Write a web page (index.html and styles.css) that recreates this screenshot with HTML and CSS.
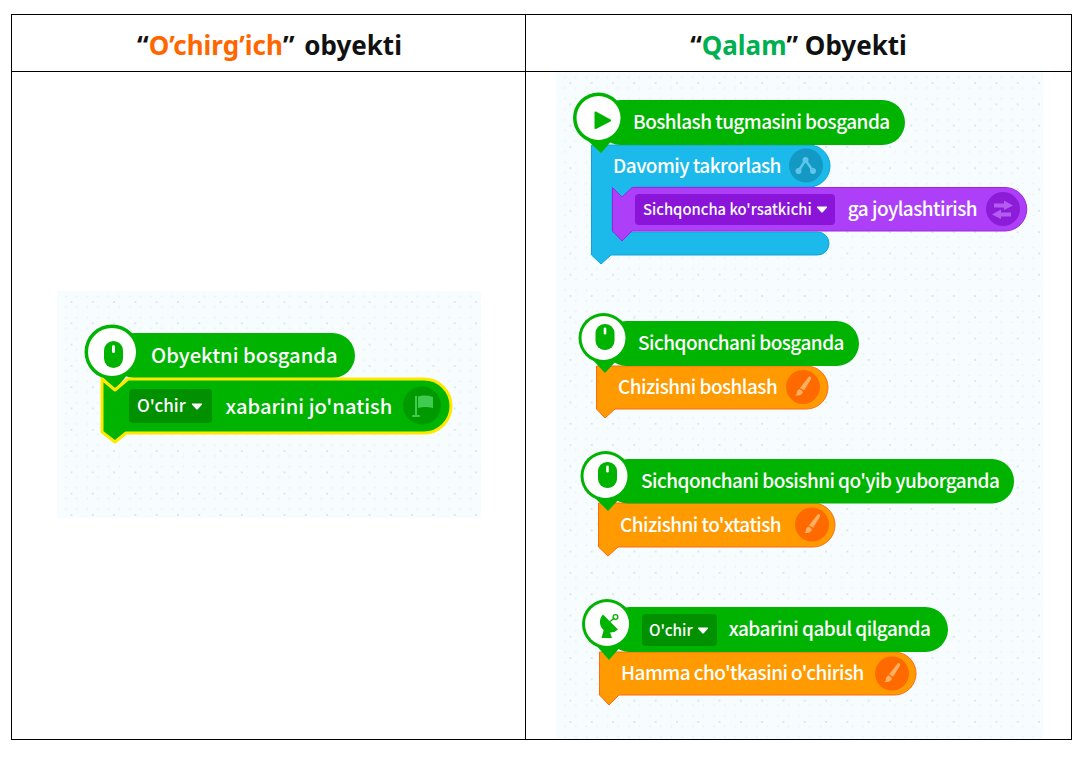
FILE: index.html
```html
<!DOCTYPE html>
<html lang="uz">
<head>
<meta charset="utf-8">
<title>Obyektlar</title>
<link rel="stylesheet" href="styles.css">
</head>
<body>
<svg class="defs" width="0" height="0" aria-hidden="true">
  <defs>
    <g id="i-brush">
      <path d="M6-10.5Q8.8-10.8 8-8L1.2 3.2-3 1Z"/>
      <path d="M-3.5 2Q-.5 3 0 5.5-2 9.200-7.8 8.500-5.500 7-6 5-5.500 2.500-3.500 2Z"/>
    </g>
    <g id="i-mouse">
      <rect x="-9.500" y="-13" width="19" height="26" rx="9"/>
      <rect class="slit" x="-1.300" y="-9.500" width="2.600" height="7" rx="1.300"/>
    </g>
    <path id="i-caret" d="M1.500 1.500H10.500Q11.500 1.500 11 2.500L7 7Q6 8 5 7L1 2.500Q.5 1.500 1.500 1.500Z"/>
  </defs>
</svg>
<main class="table">
  <h2 class="head head-left">“<span class="orange">O’chirg’ich</span>” obyekti</h2>
  <h2 class="head head-right">“<span class="green">Qalam</span>” Obyekti</h2>

  <section class="cell cell-left">
    <div class="canvas canvas-left">
      <div class="block b-hat1">
        <svg class="shape" viewBox="85 333 270 45">
          <g class="c-green">
            <rect x="112" y="333" width="243" height="45" rx="22.500"/>
            <circle cx="112" cy="352" r="27.500"/>
            <path d="M98 372 115 390 128 374Z"/>
          </g>
          <circle class="c-white" cx="112" cy="352" r="24"/>
          <g class="c-green">
            <rect x="104" y="341" width="19" height="27" rx="9.500"/>
            <rect class="slit" x="112" y="345" width="3" height="8" rx="1.500"/>
          </g>
        </svg>
        <span class="label">Obyektni bosganda</span>
      </div>
      <div class="block b-send">
        <svg class="shape" viewBox="101 378 351 56">
          <path class="c-green yellow-line" d="M102 379 115 390 128 379H424A27 27 0 0 1 424 433H126L115 442 102 432Z"/>
          <circle class="i-green" cx="422" cy="405.500" r="19"/>
          <g class="g-green">
            <rect x="415" y="396" width="2" height="20"/>
            <rect x="412" y="415" width="8" height="2" rx="1"/>
            <path d="M418 396.500Q425 394.500 433 397V408Q425 406 418 408Z"/>
          </g>
        </svg>
        <span class="drop drop-green"><span class="drop-text">O'chir</span><svg class="caret" viewBox="0 0 12 8"><use href="#i-caret"/></svg></span>
        <span class="label">xabarini jo'natish</span>
      </div>
    </div>
  </section>

  <section class="cell cell-right">
    <div class="canvas canvas-right">
      <div class="block b-loop">
        <svg class="shape" viewBox="591 145 239 120">
          <path class="c-blue" d="M591.500 145H809A21 21 0 0 1 809 187H634L622 199 612 189V232H817.500A11.500 11.500 0 0 1 817.500 255H611L601 264 591.500 255Z"/>
          <circle class="i-blue" cx="806" cy="165.500" r="17"/>
          <g class="g-blue">
            <path class="g-line" d="M798.500 171 805.500 160 813 171"/>
            <circle cx="805.500" cy="160" r="3"/>
            <circle cx="798.500" cy="171" r="3"/>
            <circle cx="813" cy="171" r="3"/>
          </g>
        </svg>
        <span class="label">Davomiy takrorlash</span>
      </div>
      <div class="block b-move">
        <svg class="shape" viewBox="612 187 415 44">
          <path class="c-purple" d="M612.500 187.500 622 197 632 187.500H1005A21.500 21.500 0 0 1 1005 231H632L622 241 612.500 231Z"/>
          <circle class="i-purple" cx="1003" cy="209" r="17"/>
          <g class="g-purple">
            <path d="M994 203.500H1004V200.500L1013 205.500 1004 210V207.500H994Z"/>
            <path d="M1011 212.500H1001V209.500L992 214.500 1001 219V216.500H1011Z"/>
          </g>
        </svg>
        <span class="drop drop-purple"><span class="drop-text">Sichqoncha ko'rsatkichi</span><svg class="caret" viewBox="0 0 12 8"><use href="#i-caret"/></svg></span>
        <span class="label">ga joylashtirish</span>
      </div>
      <div class="block b-hat2">
        <svg class="shape" viewBox="573 100 332 45">
          <g class="c-green">
            <rect x="598" y="100" width="307" height="45" rx="22.500"/>
            <circle cx="598.500" cy="118" r="25.500"/>
            <path d="M586 139 601 153 615 137Z"/>
          </g>
          <circle class="c-white" cx="598.500" cy="118" r="22"/>
          <path class="c-green play" d="M595.500 112.500 610 120.500 595.500 128Z"/>
        </svg>
        <span class="label">Boshlash tugmasini bosganda</span>
      </div>

      <div class="block b-or1">
        <svg class="shape" viewBox="596 366 232 43">
          <path class="c-orange" d="M596.500 366H806.500A21.500 21.500 0 0 1 806.500 409H615L605 418 596.500 409Z"/>
          <circle class="i-orange" cx="803" cy="387" r="17"/>
          <use class="g-orange" href="#i-brush" transform="translate(803 387)"/>
        </svg>
        <span class="label">Chizishni boshlash</span>
      </div>
      <div class="block b-hat3">
        <svg class="shape" viewBox="579 321 280 45">
          <g class="c-green">
            <rect x="604" y="321" width="255" height="45" rx="22.500"/>
            <circle cx="603.500" cy="338" r="25"/>
            <path d="M591 358 605 373 619 358Z"/>
          </g>
          <circle class="c-white" cx="603.500" cy="338" r="22"/>
          <use class="c-green" href="#i-mouse" transform="translate(605 337)"/>
        </svg>
        <span class="label">Sichqonchani bosganda</span>
      </div>

      <div class="block b-or2">
        <svg class="shape" viewBox="598 503 237 44">
          <path class="c-orange" d="M598.500 503H813A22 22 0 0 1 813 547H618L608 556 598.500 547Z"/>
          <circle class="i-orange" cx="812" cy="524.500" r="17"/>
          <use class="g-orange" href="#i-brush" transform="translate(812 524.500)"/>
        </svg>
        <span class="label">Chizishni to'xtatish</span>
      </div>
      <div class="block b-hat4">
        <svg class="shape" viewBox="581 459 433 44">
          <g class="c-green">
            <rect x="606" y="459" width="408" height="44.500" rx="22"/>
            <circle cx="605.500" cy="476" r="25"/>
            <path d="M593 496 608 511 622 496Z"/>
          </g>
          <circle class="c-white" cx="605.500" cy="476" r="22"/>
          <use class="c-green" href="#i-mouse" transform="translate(607.500 475)"/>
        </svg>
        <span class="label">Sichqonchani bosishni qo'yib yuborganda</span>
      </div>

      <div class="block b-or3">
        <svg class="shape" viewBox="599 652 317 43">
          <path class="c-orange" d="M599.500 652H894.500A21.500 21.500 0 0 1 894.500 695H619L609 705 599.500 695Z"/>
          <circle class="i-orange" cx="892" cy="673.500" r="17"/>
          <use class="g-orange" href="#i-brush" transform="translate(892 673.500)"/>
        </svg>
        <span class="label">Hamma cho'tkasini o'chirish</span>
      </div>
      <div class="block b-hat5">
        <svg class="shape" viewBox="582 607 366 45">
          <g class="c-green">
            <rect x="607" y="607" width="341" height="45" rx="22.500"/>
            <circle cx="607" cy="624" r="25"/>
            <path d="M595 644 609 660 623 644Z"/>
          </g>
          <circle class="c-white" cx="607" cy="624" r="22"/>
          <g class="c-green">
            <path d="M603 614.500A10.600 10.600 0 0 0 618 629.500Z"/>
            <path d="M601.500 638 604.500 627 608.500 628 612 638Z"/>
            <path class="dish-line" d="M610 621.500 614.500 618"/>
            <circle class="dish-ring" cx="615.500" cy="617" r="2.400"/>
          </g>
        </svg>
        <span class="drop drop-green"><span class="drop-text">O'chir</span><svg class="caret" viewBox="0 0 12 8"><use href="#i-caret"/></svg></span>
        <span class="label">xabarini qabul qilganda</span>
      </div>
    </div>
  </section>
</main>
</body>
</html>
```

FILE: styles.css
```css
* { box-sizing: border-box; }

html, body { margin: 0; background: #fff; }

body { padding: 14px 0 0 11px; }

.defs { position: absolute; }

.table {
  display: grid;
  grid-template-columns: 514px 545px;
  grid-template-rows: 57px 667px;
  width: 1061px;
  height: 726px;
  border: 1px solid #000;
}

.head {
  display: flex;
  justify-content: center;
  align-items: center;
  margin: 0;
  padding-top: 3px;
  font: 700 26px "Noto Sans", sans-serif;
  color: #111;
  white-space: pre;
  border-bottom: 1px solid #000;
}

.head-left { border-right: 1px solid #000; word-spacing: 3px; padding-left: 2px; }
.orange { color: #ff6600; }
.green { color: #00b050; }

.cell {
  display: flex;
  justify-content: center;
  align-items: center;
}

.cell-left { border-right: 1px solid #000; }

.canvas {
  position: relative;
  background-color: #f7fcff;
  background-image:
    radial-gradient(circle, #d8e8f2 1px, transparent 1.4px),
    radial-gradient(circle, #ecf4f9 .9px, transparent 1.2px);
  background-size: 21.3px 21.3px, 10.65px 10.65px;
  background-position: 3.8px .4px, 3.8px 0;
}

.canvas-left { width: 424px; height: 227px; margin: 0 0 2px 1px; }
.canvas-right { width: 487px; height: 667px; margin-left: 2px; }

.block {
  position: absolute;
  display: flex;
  align-items: center;
  color: #fff;
}

.shape {
  position: absolute;
  inset: 0;
  width: 100%;
  height: 100%;
  overflow: visible;
}

.label, .drop { position: relative; }

.label {
  font: 500 19px "Noto Sans CJK KR", sans-serif;
  letter-spacing: -.54px;
  white-space: nowrap;
  top: -2px;
}

.canvas-left .label { font-size: 20.200px; letter-spacing: 0; top: -1px; }

.drop {
  display: flex;
  align-items: center;
  gap: 4px;
  border-radius: 4px;
  white-space: nowrap;
}

.drop-text { font: 500 15.300px "Noto Sans CJK KR", sans-serif; position: relative; top: -1px; }
.canvas-left .drop-text { font-size: 17px; top: -2px; }
.drop-purple .drop-text { font-size: 14.800px; }

.drop-green { background: #009000; height: 32px; padding: 0 8px 0 7px; margin-right: 12px; }
.canvas-left .drop-green { height: 34px; padding: 0 9px 0 8px; gap: 5px; margin-right: 14px; }
.drop-purple { background: #8a14d8; height: 31px; padding: 0 7px 0 8px; margin-right: 13px; }

.caret { width: 12px; height: 8px; fill: #fff; flex: none; }

/* block positions on the canvas */
.b-hat1 { left: 28px; top: 42px; width: 270px; height: 45px; padding-left: 66px; }
.b-send { left: 44px; top: 87px; width: 351px; height: 56px; padding-left: 28px; }
.b-hat2 { left: 17px; top: 28px; width: 332px; height: 45px; padding-left: 60px; }
.b-loop { left: 35px; top: 73px; width: 239px; height: 120px; padding-left: 22px; align-items: flex-start; }
.b-loop .label { top: 6px; }
.b-move { left: 56px; top: 115px; width: 415px; height: 44px; padding-left: 23px; }
.b-hat3 { left: 23px; top: 249px; width: 280px; height: 45px; padding-left: 59px; }
.b-or1 { left: 40px; top: 294px; width: 232px; height: 43px; padding-left: 22px; }
.b-hat4 { left: 25px; top: 387px; width: 433px; height: 44px; padding-left: 60px; }
.b-or2 { left: 42px; top: 431px; width: 237px; height: 44px; padding-left: 22px; }
.b-hat5 { left: 26px; top: 535px; width: 366px; height: 45px; padding-left: 60px; }
.b-or3 { left: 43px; top: 580px; width: 317px; height: 43px; padding-left: 22px; }

/* block and icon paint */
.c-green { fill: #00b300; }
.c-white { fill: #fff; }
.slit { fill: #fff; }
.yellow-line { stroke: #ffe800; stroke-width: 3px; stroke-linejoin: round; }
.play { stroke: #00b300; stroke-width: 2px; stroke-linejoin: round; }
.c-blue { fill: #1bbaea; stroke: #10a3d4; stroke-width: 1px; }
.c-purple { fill: #ae3ff8; stroke: #9a28e0; stroke-width: 1px; }
.c-orange { fill: #ff9a00; stroke: #ff6a10; stroke-width: 1px; }

.i-green { fill: #009a00; }
.i-blue { fill: #1498c4; }
.i-purple { fill: #8c1cd8; }
.i-orange { fill: #ff6a00; }

.g-green { fill: #3fcc50; }
.g-blue { fill: #5cc6ea; }
.g-purple { fill: #b45cf0; }
.g-orange { fill: #ffb060; }
.g-line { fill: none; stroke: #5cc6ea; stroke-width: 2.500px; }
.dish-line { fill: none; stroke: #00b300; stroke-width: 1.500px; }
.dish-ring { fill: none; stroke: #00b300; stroke-width: 1.300px; }
```
